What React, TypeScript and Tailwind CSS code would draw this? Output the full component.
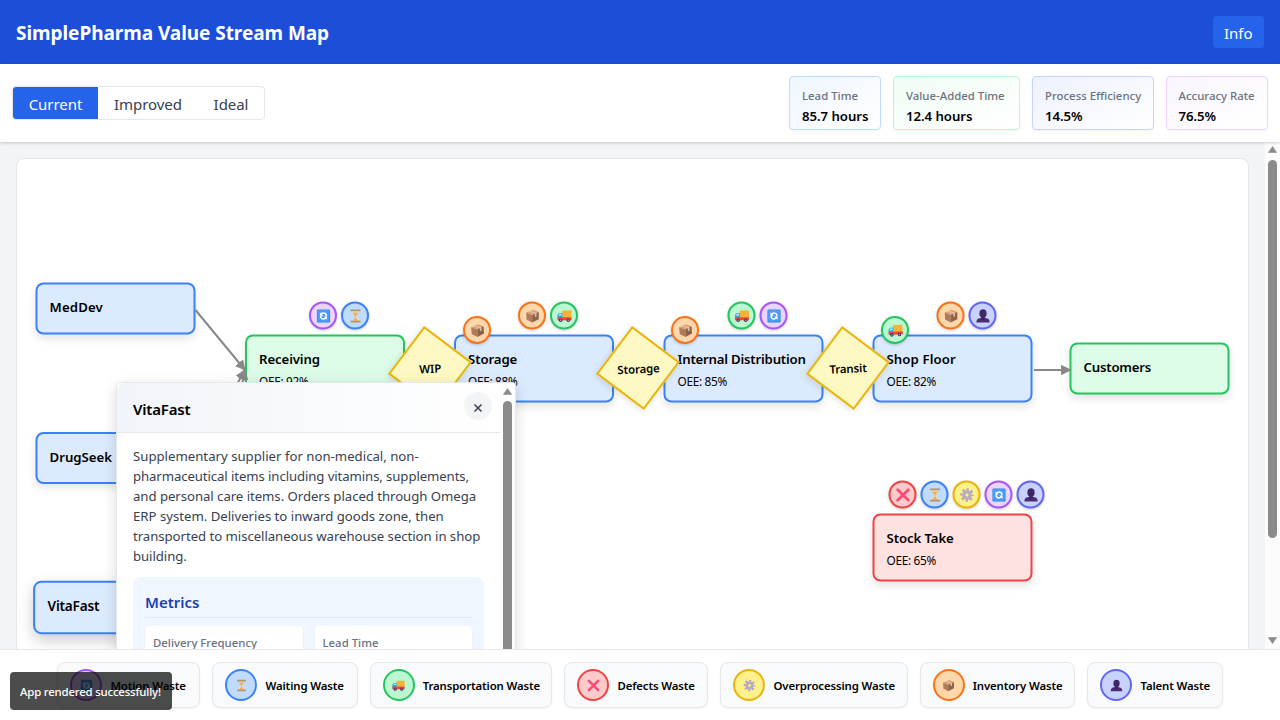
import React from "react";

type Kind = "motion" | "waiting" | "transport" | "defects" | "over" | "inventory" | "talent";

const circle: Record<Kind, string> = {
  motion: "bg-[#e9d5ff] border-[#a855f7]",
  waiting: "bg-[#bfdbfe] border-[#3b82f6]",
  transport: "bg-[#bbf7d0] border-[#22c55e]",
  defects: "bg-[#fecaca] border-[#ef4444]",
  over: "bg-[#fef08a] border-[#eab308]",
  inventory: "bg-[#fed7aa] border-[#f97316]",
  talent: "bg-[#c7d2fe] border-[#6366f1]",
};

function Glyph({ kind, className }: { kind: Kind; className: string }) {
  return (
    <svg viewBox="0 0 16 16" className={className} fill="none">
      {kind === "motion" && (
        <>
          <rect x="1" y="1" width="14" height="14" rx="1.5" fill="#2f86df" />
          <rect x="1.5" y="1.5" width="12.6" height="12.6" rx="1.2" fill="#4a9cfa" />
          <path d="M4.9 6.9A3.3 3.3 0 0 1 11 6.8V8.2M11.1 9.1A3.3 3.3 0 0 1 5 9.2V7.8" stroke="#fff" strokeWidth="1.6" />
          <path d="M4.2 4V7.6H7.8ZM11.8 12V8.4H8.2Z" fill="#fff" />
        </>
      )}
      {kind === "waiting" && (
        <>
          <path d="M4.2 2.2h7.6c0 3-1.6 4.4-2.9 5.8 1.3 1.4 2.9 2.8 2.9 5.8H4.2c0-3 1.6-4.4 2.9-5.8C5.8 6.6 4.2 5.2 4.2 2.2Z" fill="#dcdfe0" />
          <path d="M4.9 4.3h6.2C10.700 5.900 9.300 6.800 8.600 7.800v2.200l2.700 3H4.700l2.700-3V7.800C6.700 6.800 5.300 5.900 4.900 4.300Z" fill="#f3b04a" />
          <rect x="2.500" y="1" width="11" height="2" rx=".8" fill="#b8935c" />
          <rect x="2.500" y="13" width="11" height="2" rx=".8" fill="#b8935c" />
        </>
      )}
      {kind === "transport" && (
        <>
          <rect x="5.600" y="2.200" width="9.900" height="8.600" rx=".8" fill="#f3b434" />
          <path d="M.5 10.500V7.200L2 4.800h3.800v5.700Z" fill="#32a3ef" />
          <path d="M1.500 7.500 2.600 5.700H4.800V7.500Z" fill="#c8f0ff" />
          <rect x=".4" y="9.300" width="15.200" height="3.200" rx=".7" fill="#f04a38" />
          <circle cx="3.900" cy="12.500" r="1.900" fill="#4a3454" />
          <circle cx="12" cy="12.500" r="1.900" fill="#4a3454" />
          <circle cx="3.900" cy="12.500" r=".7" fill="#c9bfd0" />
          <circle cx="12" cy="12.500" r=".7" fill="#c9bfd0" />
        </>
      )}
      {kind === "defects" && (
        <path d="M2.300 2.300 13.700 13.700M13.700 2.300 2.300 13.700" stroke="#fc4a78" strokeWidth="3" strokeLinecap="round" />
      )}
      {kind === "over" && (
        <>
          <circle cx="8" cy="8" r="5.900" stroke="#b4a7c5" strokeWidth="2.600" strokeDasharray="2.500 2.134" strokeDashoffset="1.250" />
          <circle cx="8" cy="8" r="3.900" stroke="#b7abc6" strokeWidth="2.600" />
          <circle cx="8" cy="8" r="2.300" stroke="#9485ab" strokeWidth=".7" />
        </>
      )}
      {kind === "inventory" && (
        <>
          <path d="M1.300 4.300 8.800 1.300 14.700 3.800 7.600 7Z" fill="#d7a27c" />
          <path d="M1.300 4.300 7.600 7V15L1.700 11.800Z" fill="#b17b5b" />
          <path d="M7.600 7 14.700 3.800V11.500L7.600 15Z" fill="#8f624d" />
          <path d="M4 3.200 10.600 5.700V9L12.300 8.200V4.900L5.800 2.500Z" fill="#e5c3a0" />
        </>
      )}
      {kind === "talent" && (
        <>
          <path d="M1 15v-1c0-2.300 1.700-3.400 4-3.800h6c2.300.4 4 1.500 4 3.800v1Z" fill="#4a2e70" />
          <path d="M6.200 8h3.600v3.500L8 12.500 6.200 11.500Z" fill="#3b235e" />
          <path d="M4.200 4.700C4.200 2.300 5.700.9 8 .9s3.800 1.400 3.800 3.800v1.500C11.800 8.700 9.900 10.300 8 10.300S4.200 8.700 4.200 6.200Z" fill="#402664" />
        </>
      )}
    </svg>
  );
}

function Badge({ kind }: { kind: Kind }) {
  return (
    <div className={`flex size-7 shrink-0 items-center justify-center rounded-full border-2 shadow-[0_1px_3px_rgba(0,0,0,0.2)] ${circle[kind]}`}>
      <Glyph kind={kind} className="size-[15px]" />
    </div>
  );
}

const tones = {
  blue: "bg-[#dbeafe] border-[#3b82f6]",
  green: "bg-[#dcfce7] border-[#22c55e]",
  red: "bg-[#fee2e2] border-[#ef4444]",
};

type NodeProps = {
  pos: string;
  tone: keyof typeof tones;
  title: string;
  titleClass?: string;
  oee?: string;
  waste?: Kind[];
  wastePos?: string;
};

function ProcessNode({ pos, tone, title, titleClass = "", oee, waste, wastePos }: NodeProps) {
  return (
    <div className={`absolute w-40 rounded-lg border-2 px-3 pt-3 ${tones[tone]} ${pos}`}>
      {waste && (
        <div className={`absolute -top-[35px] flex gap-1 ${wastePos}`}>
          {waste.map((k) => (
            <Badge key={k} kind={k} />
          ))}
        </div>
      )}
      <div className={`text-[13.2px] leading-5 font-semibold whitespace-nowrap ${titleClass}`}>{title}</div>
      {oee && <div className="mt-[4px] text-[11.8px] leading-4 tracking-[-0.3px] whitespace-nowrap">OEE: {oee}</div>}
    </div>
  );
}

function Diamond({ pos, label, kind }: { pos: string; label: string; kind: Kind }) {
  return (
    <div className={`absolute top-[196px] size-[60px] ${pos}`}>
      <div className="absolute inset-0 flex rotate-[37deg] items-center justify-center border-2 border-[#eab308] bg-[#fef9c3] shadow-[0_2px_6px_rgba(0,0,0,0.12)]">
        <span className="-rotate-[40deg] pt-[2px] text-[11.4px] font-semibold tracking-[-0.1px]">{label}</span>
      </div>
      <div className="absolute top-[-22.5px] left-[63px] -rotate-3">
        <Badge kind={kind} />
      </div>
    </div>
  );
}

const metrics = [
  { label: "Lead Time", value: "85.7 hours", cls: "w-[92px] border-[#bfdbfe] from-[#eff6ff]" },
  { label: "Value-Added Time", value: "12.4 hours", cls: "w-[127px] border-[#bbf7d0] from-[#f0fdf4]" },
  { label: "Process Efficiency", value: "14.5%", cls: "w-[121.5px] border-[#c7d2fe] from-[#eef2ff]" },
  { label: "Accuracy Rate", value: "76.5%", cls: "w-[102.5px] border-[#e9d5ff] from-[#faf5ff]" },
];

const legend: { kind: Kind; label: string; cls: string }[] = [
  { kind: "motion", label: "Motion Waste", cls: "w-[143.1px]" },
  { kind: "waiting", label: "Waiting Waste", cls: "w-[145.2px]" },
  { kind: "transport", label: "Transportation Waste", cls: "w-[182.8px]" },
  { kind: "defects", label: "Defects Waste", cls: "w-[144px]" },
  { kind: "over", label: "Overprocessing Waste", cls: "w-[187.2px]" },
  { kind: "inventory", label: "Inventory Waste", cls: "w-[155.8px]" },
  { kind: "talent", label: "Talent Waste", cls: "w-[135.2px]" },
];

function Arrow({ dir, className }: { dir: "up" | "down"; className: string }) {
  return (
    <svg viewBox="0 0 9 7" className={`h-[7px] w-[9px] ${className}`}>
      <path d={dir === "up" ? "M4.5 .5 8.7 6.5H.3Z" : "M4.5 6.5 8.7 .5H.3Z"} fill="#8b8b8b" stroke="#8b8b8b" strokeWidth=".6" strokeLinejoin="round" />
    </svg>
  );
}

function DetailPanel() {
  return (
    <div className="absolute top-[240px] left-[116px] flex h-[500px] w-[400px] overflow-hidden rounded border border-[#e5e7eb] bg-white shadow-[0_4px_14px_rgba(0,0,0,0.15)]">
      <div className="flex w-[383px] shrink-0 flex-col">
        <div className="flex h-[50px] shrink-0 items-center justify-between rounded-tl-lg border-b border-[#e5e7eb] bg-gradient-to-r from-[#f1f5f9] to-white pr-2 pl-4">
          <h3 className="pt-[3px] text-[15px] font-semibold tracking-[-0.2px]">VitaFast</h3>
          <button className="mb-[3px] flex size-7 items-center justify-center rounded-full bg-[#f3f4f6]">
            <svg viewBox="0 0 10 10" className="mt-1 size-[10px]">
              <path d="M1.5 1.5 8.5 8.5M8.5 1.5 1.5 8.5" stroke="#374151" strokeWidth="1.5" />
            </svg>
          </button>
        </div>
        <div className="px-4 pt-[13px]">
          <p className="text-[13.2px] leading-5 tracking-[-0.07px] whitespace-nowrap text-[#374151]">
            <span className="tracking-normal">Supplementary supplier for non-medical, non-</span><br />
            <span className="tracking-[-0.1px]">pharmaceutical items including vitamins, supplements,</span><br />
            <span className="tracking-[-0.05px]">and personal care items. Orders placed through Omega</span><br />
            <span className="tracking-[-0.01px]">ERP system. Deliveries to inward goods zone, then</span><br />
            <span className="tracking-[-0.05px]">transported to miscellaneous warehouse section in shop</span><br />
            building.
          </p>
          <div className="mt-[11px] rounded-lg bg-[#eff6ff] p-3">
            <h4 className="border-b border-[#dbeafe] pt-px pb-[3px] text-[15px] leading-6 font-semibold text-[#1e40af]">Metrics</h4>
            <div className="mt-2 grid grid-cols-2 gap-3">
              <div className="h-14 rounded bg-white p-2 text-[11.4px] leading-[18px] font-medium text-[#6b7280] shadow-xs">Delivery Frequency</div>
              <div className="h-14 rounded bg-white p-2 text-[11.4px] leading-[18px] font-medium text-[#6b7280] shadow-xs">Lead Time</div>
            </div>
          </div>
        </div>
      </div>
      <div className="flex w-[15px] flex-col items-center bg-[#fcfcfc] pt-[5px]">
        <Arrow dir="up" className="" />
        <div className="mt-[6px] w-[9px] flex-1 rounded-full bg-[#8b8b8b]" />
      </div>
    </div>
  );
}

export default function App() {
  return (
    <div className="relative flex h-[720px] w-[1280px] flex-col overflow-hidden bg-[#f3f4f6] font-['Noto_Sans','Open_Sans',sans-serif] text-black">
      <header className="flex h-16 shrink-0 items-center justify-between bg-[#1d4ed8] px-4 text-white">
        <h1 className="pt-[3px] text-[19px] font-bold tracking-[-0.05px] whitespace-nowrap">SimplePharma Value Stream Map</h1>
        <button className="flex h-8 w-[51.5px] items-center justify-center rounded bg-[#2563eb] pt-[2px] text-[15px]">Info</button>
      </header>

      <div className="z-10 flex h-[78px] shrink-0 items-center justify-between bg-white px-3 shadow-[0_1px_3px_rgba(0,0,0,0.2)]">
        <div className="flex h-[34px] w-[253px] overflow-hidden rounded border border-[#e5e7eb] text-[15px] tracking-[-0.05px] text-[#374151]">
          <button className="flex w-[85px] items-center justify-center bg-[#2563eb] pt-[2px] text-white">Current</button>
          <button className="flex w-[100px] items-center justify-center pt-[2px]">Improved</button>
          <button className="flex w-[66px] items-center justify-center pt-[2px]">Ideal</button>
        </div>
        <div className="flex gap-3">
          {metrics.map((m) => (
            <div key={m.label} className={`flex h-[54px] flex-col rounded border bg-gradient-to-br to-white px-3 pt-[11px] whitespace-nowrap shadow-xs ${m.cls}`}>
              <span className="text-[11.4px] leading-4 font-medium text-[#6b7280]">{m.label}</span>
              <span className="mt-[2px] text-[13.2px] leading-5 font-semibold tracking-[-0.05px]">{m.value}</span>
            </div>
          ))}
        </div>
      </div>

      <main className="relative flex h-[507px] shrink-0 overflow-hidden">
        <div className="flex-1 px-4 pt-4">
          <div className="h-[760px] rounded-lg border border-[#e5e7eb] bg-white" />
        </div>
        <div className="flex w-[15px] flex-col items-center bg-[#fcfcfc] pt-[4px] pb-[5px]">
          <Arrow dir="up" className="" />
          <div className="mt-[7px] h-[378px] w-[9px] rounded-full bg-[#8b8b8b]" />
          <Arrow dir="down" className="mt-auto" />
        </div>

        <ProcessNode pos="left-[36px] top-[141px] h-[52px] -translate-[0.5px] shadow-[0_4px_8px_rgba(0,0,0,0.1)]" tone="blue" title="MedDev" titleClass="tracking-[0.15px]" />
        <ProcessNode pos="left-[36px] top-[290px] h-[52px] -translate-x-[0.5px] shadow-[0_4px_8px_rgba(0,0,0,0.1)]" tone="blue" title="DrugSeek" titleClass="pt-px" />
        <ProcessNode pos="left-[36px] top-[440px] h-[52px] -translate-[0.5px] scale-[1.03] shadow-[0_6px_14px_rgba(0,0,0,0.2)]" tone="blue" title="VitaFast" titleClass="tracking-[-0.2px]" />
        <ProcessNode pos="left-[245px] top-[193px] h-[68px] -translate-y-[0.5px] shadow-[0_4px_8px_rgba(0,0,0,0.1)]" tone="green" title="Receiving" titleClass="tracking-[-0.1px]" oee="92%" waste={["motion", "waiting"]} wastePos="left-[62px]" />
        <ProcessNode pos="left-[454px] top-[193px] h-[68px] -translate-y-[0.5px] shadow-[0_4px_8px_rgba(0,0,0,0.1)]" tone="blue" title="Storage" titleClass="tracking-[-0.1px]" oee="88%" waste={["inventory", "transport"]} wastePos="left-[62px]" />
        <ProcessNode pos="left-[664px] top-[193px] h-[68px] -translate-[0.5px] shadow-[0_4px_8px_rgba(0,0,0,0.1)]" tone="blue" title="Internal Distribution" titleClass="tracking-[-0.2px]" oee="85%" waste={["transport", "motion"]} wastePos="left-[62px]" />
        <ProcessNode pos="left-[873px] top-[193px] h-[68px] -translate-[0.5px] shadow-[0_4px_8px_rgba(0,0,0,0.1)]" tone="blue" title="Shop Floor" titleClass="tracking-[0.1px]" oee="82%" waste={["inventory", "talent"]} wastePos="left-[62px]" />
        <ProcessNode pos="left-[1070px] top-[201px] h-[52px] -translate-[0.5px] shadow-[0_4px_8px_rgba(0,0,0,0.1)]" tone="green" title="Customers" titleClass="tracking-[-0.2px]" />
        <ProcessNode pos="left-[873px] top-[372px] h-[68px] -translate-[0.5px] shadow-[0_4px_8px_rgba(0,0,0,0.1)]" tone="red" title="Stock Take" titleClass="tracking-[-0.1px]" oee="65%" waste={["defects", "waiting", "over", "motion", "talent"]} wastePos="left-[14px]" />

        <svg className="absolute top-0 left-0 h-[507px] w-[1265px]" viewBox="0 142 1265 507">
          <defs>
            <marker id="head" viewBox="0 0 10 10" refX="9" refY="5" markerWidth="10.5" markerHeight="10.5" markerUnits="userSpaceOnUse" orient="auto">
              <path d="M0 0 10 5 0 10Z" fill="#888" />
            </marker>
          </defs>
          <g stroke="#888" strokeWidth="2">
            <path d="M195.5 310 245 370" markerEnd="url(#head)" />
            <path d="M195.5 458 245 370" markerEnd="url(#head)" />
            <path d="M195.5 607 245 370" markerEnd="url(#head)" />
            <path d="M1034 370H1070.5" markerEnd="url(#head)" />
          </g>
        </svg>

        <Diamond pos="left-[399.5px]" label="WIP" kind="inventory" />
        <Diamond pos="left-[608.3px]" label="Storage" kind="inventory" />
        <Diamond pos="left-[817.7px]" label="Transit" kind="transport" />

        <DetailPanel />
      </main>

      <footer className="flex h-[71px] shrink-0 justify-center gap-3 border-t border-[#e5e7eb] bg-white pt-3">
        {legend.map((l) => (
          <div key={l.kind} className={`flex h-[46px] shrink-0 items-center gap-2 rounded-lg border border-[#e5e7eb] bg-[#f9fafb] px-3 whitespace-nowrap shadow-xs ${l.cls}`}>
            <div className={`flex size-8 shrink-0 items-center justify-center rounded-full border-2 ${circle[l.kind]}`}>
              <Glyph kind={l.kind} className="size-[13px]" />
            </div>
            <span className="pt-[2px] text-[11.4px] font-semibold tracking-[-0.12px]">{l.label}</span>
          </div>
        ))}
      </footer>

      <div className="absolute top-[672px] left-[10px] z-20 flex h-[38px] w-[161.5px] items-center rounded bg-black/70 pt-[2px] pl-[10px] text-[11.4px] font-medium tracking-[-0.18px] whitespace-nowrap text-white">
        App rendered successfully!
      </div>
    </div>
  );
}
